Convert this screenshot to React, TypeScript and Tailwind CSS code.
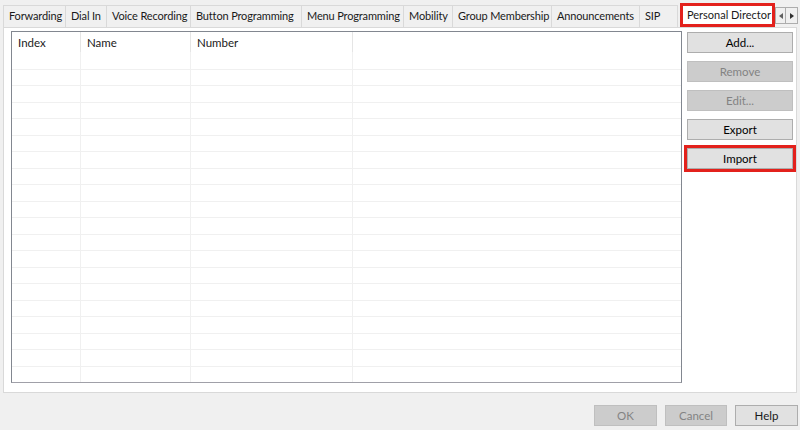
import React from 'react';

const tabs = [
  { label: 'Forwarding', w: 'w-[63px]' },
  { label: 'Dial In', w: 'w-[41px]' },
  { label: 'Voice Recording', w: 'w-[84px]' },
  { label: 'Button Programming', w: 'w-[111px]' },
  { label: 'Menu Programming', w: 'w-[102px]' },
  { label: 'Mobility', w: 'w-[49px]' },
  { label: 'Group Membership', w: 'w-[99px]' },
  { label: 'Announcements', w: 'w-[88px]' },
  { label: 'SIP', w: 'w-[38px]' },
];

const rows = Array.from({ length: 20 }, (_, i) => i);

const SideButton = ({ label, disabled, marked }: { label: string; disabled?: boolean; marked?: boolean }) => (
  <div
    className={
      'h-[21px] w-[106px] flex items-center justify-center border text-[11.5px] ' +
      (disabled
        ? 'bg-[#cccccc] border-[#bfbfbf] text-[#838383]'
        : 'bg-[#e1e1e1] border-[#adadad] text-black') +
      (marked ? ' outline-[3px] outline-solid outline-[#e3211c] outline-offset-0' : '')
    }
  >
    {label}
  </div>
);

const App = () => {
  return (
    <div className="w-[800px] h-[430px] bg-[#f0f0f0] overflow-hidden font-['Lato','Noto_Sans',sans-serif] text-[#1a1a1a]">
      {/* tab strip */}
      <div className="flex items-end pl-[3px] h-[27px]">
        {tabs.map((t) => (
          <div
            key={t.label}
            className={`${t.w} h-[22px] shrink-0 flex items-center pl-[5px] border border-b-0 border-l-0 first:border-l border-[#d9d9d9] bg-[#f0f0f0] text-[11px] tracking-[-0.15px] whitespace-nowrap`}
          >
            {t.label}
          </div>
        ))}
        <div className="w-[2px]" />
        <div className="w-[95px] h-[24px] shrink-0 bg-white border-[3px] border-[#e3211c] flex items-center pl-[4px] text-[11px] whitespace-nowrap">
          Personal Director
        </div>
        <div className="flex mb-[3px]">
          <div className="w-[11px] h-[17px] border border-[#adadad] bg-[#f0f0f0] flex items-center justify-center">
            <svg width="4" height="6" viewBox="0 0 4 6"><path d="M4 0 L0 3 L4 6 Z" fill="#606060" /></svg>
          </div>
          <div className="w-[12px] h-[17px] border border-l-0 border-[#adadad] bg-[#f0f0f0] flex items-center justify-center">
            <svg width="4" height="6" viewBox="0 0 4 6"><path d="M0 0 L4 3 L0 6 Z" fill="#303030" /></svg>
          </div>
        </div>
      </div>

      {/* tab panel */}
      <div className="ml-[3px] w-[794px] h-[366px] bg-white border border-[#d9d9d9] flex pt-[3px] pl-[7px] gap-[5px]">
        {/* list view */}
        <div className="w-[671px] h-[352px] border border-[#828790] border-b-[#a0a0a8] flex flex-col text-[11.5px]">
          <div className="flex h-[20px] shrink-0">
            <div className="w-[69px] border-r border-[#e5e5e5] pl-[6px] pt-[2px]">Index</div>
            <div className="w-[110px] border-r border-[#e5e5e5] pl-[6px] pt-[2px]">Name</div>
            <div className="w-[162px] border-r border-[#e5e5e5] pl-[6px] pt-[2px]">Number</div>
            <div className="flex-1" />
          </div>
          {rows.map((r) => (
            <div
              key={r}
              className={'flex h-[16.5px] shrink-0 ' + (r === 0 ? '' : 'border-t border-[#f0f0f0]')}
            >
              <div className="w-[69px] border-r border-[#f0f0f0]" />
              <div className="w-[110px] border-r border-[#f0f0f0]" />
              <div className="w-[162px] border-r border-[#f0f0f0]" />
              <div className="flex-1" />
            </div>
          ))}
        </div>

        {/* side buttons */}
        <div className="flex flex-col gap-[8px] pt-px">
          <SideButton label="Add..." />
          <SideButton label="Remove" disabled />
          <SideButton label="Edit..." disabled />
          <SideButton label="Export" />
          <SideButton label="Import" marked />
        </div>
      </div>

      {/* dialog buttons */}
      <div className="flex justify-end gap-[8px] pr-[2px] pt-[12px]">
        <div className="w-[63px] h-[21px] flex items-center justify-center bg-[#cccccc] border border-[#bfbfbf] text-[#838383] text-[11.5px]">OK</div>
        <div className="w-[62px] h-[21px] flex items-center justify-center bg-[#cccccc] border border-[#bfbfbf] text-[#838383] text-[11.5px]">Cancel</div>
        <div className="w-[63px] h-[21px] flex items-center justify-center bg-[#e1e1e1] border border-[#adadad] text-[11.5px]">Help</div>
      </div>
    </div>
  );
};

export default App;
